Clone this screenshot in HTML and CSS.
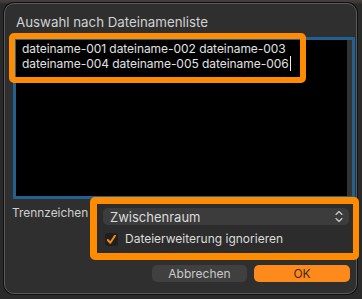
FILE: index.html
```html
<html>
<head>
   <meta charset="UTF-8">
   <title>Auswahl nach Dateinamenliste</title>

   <link rel="stylesheet" href="styles.css">
</head>
<body>

	<div class="window">
		<div class="title">Auswahl nach Dateinamenliste</div>

		<div class="editor">
			<div class="editor_text">
				dateiname-001 dateiname-002 dateiname-003<br>
				dateiname-004 dateiname-005 dateiname-006<span class="caret"></span>
			</div>
			<div class="scroll_track"></div>
			<div class="mark mark_list"></div>
		</div>

		<div class="options_row">
			<div class="options_label">Trennzeichen</div>
			<div class="options_group">
				<div class="popup">
					<span>Zwischenraum</span>
					<svg class="popup_arrows" width="8" height="13" viewBox="0 0 8 13">
						<path d="M1 4.5 L4 1.5 L7 4.5" fill="none" stroke="#cfcfcf" stroke-width="1.1" stroke-linecap="round" stroke-linejoin="round"/>
						<path d="M1 8.5 L4 11.5 L7 8.5" fill="none" stroke="#cfcfcf" stroke-width="1.1" stroke-linecap="round" stroke-linejoin="round"/>
					</svg>
				</div>
				<label class="check">
					<span class="check_box">
						<svg width="11" height="11" viewBox="0 0 11 11">
							<path d="M1.8 6 L4.3 8.8 L9 1.8" fill="none" stroke="#ff8a12" stroke-width="2" stroke-linecap="round" stroke-linejoin="round"/>
						</svg>
					</span>
					Dateierweiterung ignorieren
				</label>
				<div class="mark mark_options"></div>
			</div>
		</div>

		<div class="buttons">
			<div class="btn">Abbrechen</div>
			<div class="btn btn_ok">OK</div>
		</div>
	</div>

</body>
</html>
```

FILE: styles.css
```css
body{
	margin: 0;
	height: 299px;
	overflow: hidden;
	background: linear-gradient(#463f3f 0, #3a3535 3px, #2a2a2a 4px);
	font-family: Inter, "Noto Sans", sans-serif;
	font-size: 12px;
}
.window{
	margin: 3px 0 0 4px;
	width: 353px;
	height: 291px;
	box-sizing: border-box;
	border: 1px solid #5a5a5a;
	border-radius: 10px;
	box-shadow: 0 0 0 1px #111111;
	background: #2f2f2f;
}
.title{
	margin: 10px 0 0 11px;
	font-size: 13.3px;
	line-height: 16px;
	color: #d2d2d2;
}
.editor{
	position: relative;
	display: flex;
	margin: 7px 0 0 8px;
	width: 342px;
	height: 162px;
	box-sizing: border-box;
	border: 3px solid #21608f;
	background: #000000;
}
.editor_text{
	flex: 1;
	padding: 2px 0 0 6px;
	font-size: 12px;
	letter-spacing: -0.05px;
	line-height: 14px;
	color: #e2e2e2;
	white-space: nowrap;
}
.caret{
	display: inline-block;
	width: 1px;
	height: 15px;
	margin-left: 1px;
	vertical-align: -3px;
	background: #f0f0f0;
}
.scroll_track{
	width: 5px;
	background: #333333;
}
.mark{
	position: absolute;
	box-sizing: border-box;
	border: 6px solid #ff8c00;
	border-radius: 5px;
	pointer-events: none;
}
.mark_list{
	left: -7px;
	top: -7px;
	width: 297px;
	height: 50px;
}
.options_row{
	display: flex;
	margin: 5px 0 0 7px;
}
.options_label{
	flex: none;
	width: 85px;
	padding-top: 1px;
	font-size: 11.9px;
	line-height: 16px;
	color: #cfcfcf;
}
.options_group{
	position: relative;
	flex: none;
	width: 256px;
	height: 49px;
	box-sizing: border-box;
	padding: 4px 4px 0 6px;
	background: #2c2c2c;
}
.mark_options{
	left: -7px;
	top: -7px;
	right: -6px;
	bottom: -7px;
	border-width: 7px 6px 7px 7px;
}
.popup{
	display: flex;
	align-items: center;
	justify-content: space-between;
	height: 17px;
	padding: 0 6px 0 7px;
	border-radius: 5px;
	background: #3c3c3c;
	color: #dcdcdc;
	font-size: 13px;
}
.popup_arrows{
	display: block;
}
.check{
	display: flex;
	align-items: center;
	gap: 7px;
	margin: 7px 0 0 2px;
	line-height: 14px;
	color: #dcdcdc;
}
.check_box{
	display: flex;
	align-items: center;
	justify-content: center;
	width: 13px;
	height: 13px;
	border-radius: 3px;
	background: #1f1f1f;
}
.buttons{
	display: flex;
	justify-content: flex-end;
	gap: 7px;
	margin: 12px 6px 0 0;
}
.btn{
	width: 95px;
	height: 17px;
	line-height: 17px;
	border-radius: 5px;
	background: #404040;
	color: #cacaca;
	text-align: center;
}
.btn_ok{
	width: 96px;
	background: #ff8a1c;
	color: #3b2a18;
}
```
